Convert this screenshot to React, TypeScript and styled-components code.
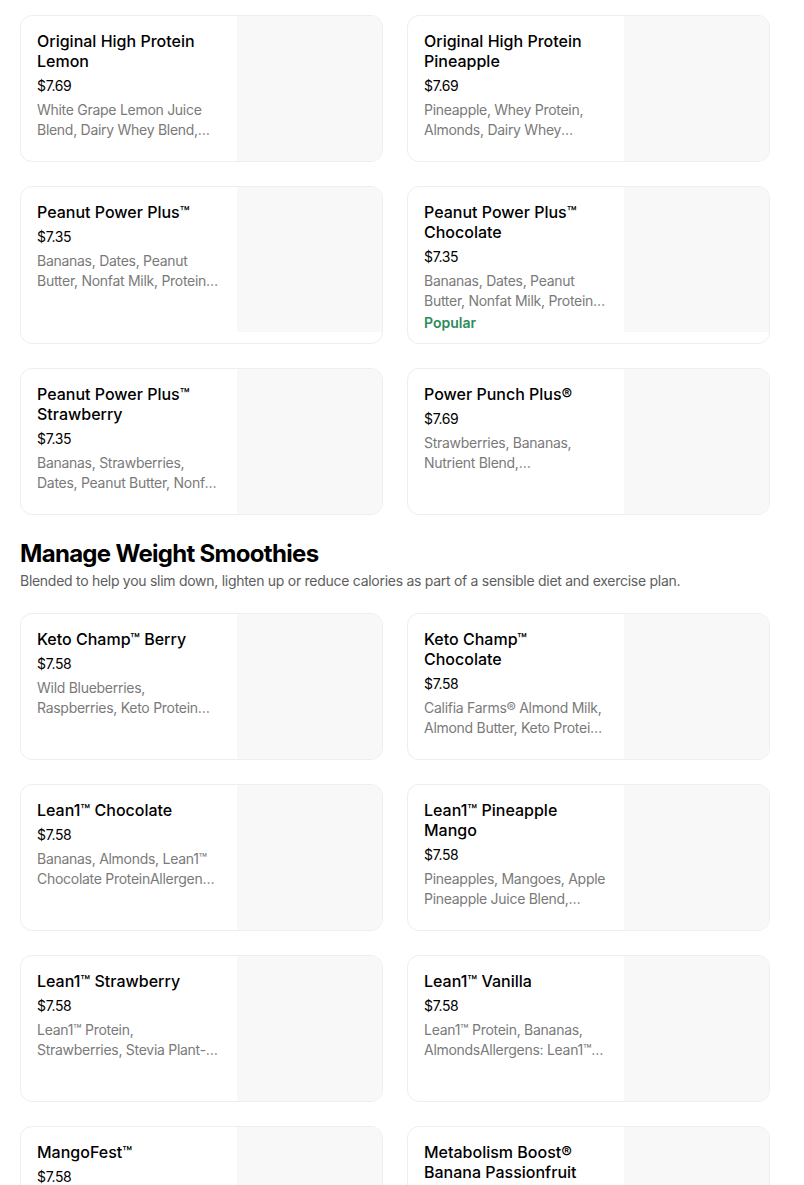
import styled, { createGlobalStyle } from 'styled-components'

type Item = {
  name: string
  price: string
  description: string
  popular?: boolean
}

type Section = {
  title?: string
  subtitle?: string
  items: Item[]
}

const sections: Section[] = [
  {
    items: [
      {
        name: 'Original High Protein Lemon',
        price: '$7.69',
        description: 'White Grape Lemon Juice Blend, Dairy Whey Blend, Protein Blend, Ice',
      },
      {
        name: 'Original High Protein Pineapple',
        price: '$7.69',
        description: 'Pineapple, Whey Protein, Almonds, Dairy Whey Concentrate, Ice',
      },
      {
        name: 'Peanut Power Plus™',
        price: '$7.35',
        description: 'Bananas, Dates, Peanut Butter, Nonfat Milk, Protein Blend, Ice',
      },
      {
        name: 'Peanut Power Plus™ Chocolate',
        price: '$7.35',
        description: 'Bananas, Dates, Peanut Butter, Nonfat Milk, Protein Blend, Cocoa',
        popular: true,
      },
      {
        name: 'Peanut Power Plus™ Strawberry',
        price: '$7.35',
        description: 'Bananas, Strawberries, Dates, Peanut Butter, Nonfat Milk, Protein Blend',
      },
      {
        name: 'Power Punch Plus®',
        price: '$7.69',
        description: 'Strawberries, Bananas, Nutrient Blend, Immunity\u00a0Support\u00a0Blend, Ice',
      },
    ],
  },
  {
    title: 'Manage Weight Smoothies',
    subtitle:
      'Blended to help you slim down, lighten up or reduce calories as part of a sensible diet and exercise plan.',
    items: [
      {
        name: 'Keto Champ™ Berry',
        price: '$7.58',
        description: 'Wild Blueberries, Raspberries, Keto Protein Blend, Almond Milk',
      },
      {
        name: 'Keto Champ™ Chocolate',
        price: '$7.58',
        description: 'Califia Farms® Almond Milk, Almond Butter, Keto Protein Blend, Cocoa',
      },
      {
        name: 'Lean1™ Chocolate',
        price: '$7.58',
        description: 'Bananas, Almonds, Lean1™ Chocolate ProteinAllergen\u200Bs: Milk, Soy, Tree Nuts',
      },
      {
        name: 'Lean1™ Pineapple Mango',
        price: '$7.58',
        description: 'Pineapples, Mangoes, Apple Pineapple Juice Blend, Lean1™\u00a0Vanilla\u00a0Protein',
      },
      {
        name: 'Lean1™ Strawberry',
        price: '$7.58',
        description: 'Lean1™ Protein, Strawberries, Stevia Plant-Based Sweetener',
      },
      {
        name: 'Lean1™ Vanilla',
        price: '$7.58',
        description: 'Lean1™ Protein, Bananas, AlmondsAllergens: Lean1™ Vanilla Protein',
      },
      {
        name: 'MangoFest™',
        price: '$7.58',
        description: 'Mangoes, Bananas, Orange Juice, Nutrient Blend, Ice',
      },
      {
        name: 'Metabolism Boost® Banana Passionfruit',
        price: '$7.58',
        description: 'Bananas, Passionfruit Mango Juice Blend, Metabolism Booster',
      },
    ],
  },
]

function MenuCard({ item }: { item: Item }) {
  return (
    <Card>
      <Info>
        <Name>{item.name}</Name>
        <Price>{item.price}</Price>
        <Description>{item.description}</Description>
        {item.popular && <Badge>Popular</Badge>}
      </Info>
      <Thumb />
    </Card>
  )
}

export default function App() {
  return (
    <>
      <GlobalStyle />
      <Page>
        {sections.map((section, i) => (
          <SectionBlock key={i}>
            {section.title && (
              <Header>
                <Heading>{section.title}</Heading>
                <Subtitle>{section.subtitle}</Subtitle>
              </Header>
            )}
            <Grid>
              {section.items.map((item) => (
                <MenuCard key={item.name} item={item} />
              ))}
            </Grid>
          </SectionBlock>
        ))}
      </Page>
    </>
  )
}

const GlobalStyle = createGlobalStyle`
  * { box-sizing: border-box; }
  body {
    margin: 0;
    background: #ffffff;
    font-family: Inter, "Noto Sans", sans-serif;
    color: #000000;
    overflow: hidden;
  }
`

const Page = styled.main`
  width: 804px;
  padding: 15px 34px 0 20px;
  display: flex;
  flex-direction: column;
  gap: 23px;
`

const SectionBlock = styled.section`
  display: flex;
  flex-direction: column;
`

const Header = styled.header`
  display: flex;
  flex-direction: column;
  gap: 1px;
  margin-bottom: 22px;
`

const Heading = styled.h2`
  margin: 0;
  font-size: 24px;
  line-height: 32px;
  font-weight: 700;
  letter-spacing: -0.7px;
`

const Subtitle = styled.p`
  margin: 0;
  font-size: 14px;
  line-height: 20px;
  letter-spacing: -0.28px;
  color: #5e5e5e;
`

const Grid = styled.div`
  display: grid;
  grid-template-columns: 1fr 1fr;
  column-gap: 24px;
  row-gap: 24px;
`

const Card = styled.article`
  display: flex;
  min-height: 147px;
  border: 1px solid #eeeeee;
  border-radius: 12px;
  overflow: hidden;
  background: #ffffff;
`

const Info = styled.div`
  flex: 1;
  min-width: 0;
  padding: 15px 16px 10px 16px;
  display: flex;
  flex-direction: column;
`

const Name = styled.h3`
  margin: 0;
  font-size: 16px;
  line-height: 20px;
  font-weight: 500;
  color: #000000;
`

const Price = styled.div`
  margin-top: 5px;
  font-size: 14px;
  line-height: 20px;
  letter-spacing: -0.35px;
  color: #000000;
`

const Description = styled.p`
  margin: 4px 0 0;
  font-size: 14px;
  line-height: 20px;
  letter-spacing: -0.28px;
  color: #7a7a7a;
  display: -webkit-box;
  -webkit-line-clamp: 2;
  -webkit-box-orient: vertical;
  overflow: hidden;
`

const Badge = styled.span`
  margin-top: 2px;
  font-size: 14px;
  line-height: 20px;
  font-weight: 600;
  color: #2e8b5c;
`

const Thumb = styled.div`
  flex: 0 0 145px;
  height: 145px;
  background: #f8f8f8;
`
